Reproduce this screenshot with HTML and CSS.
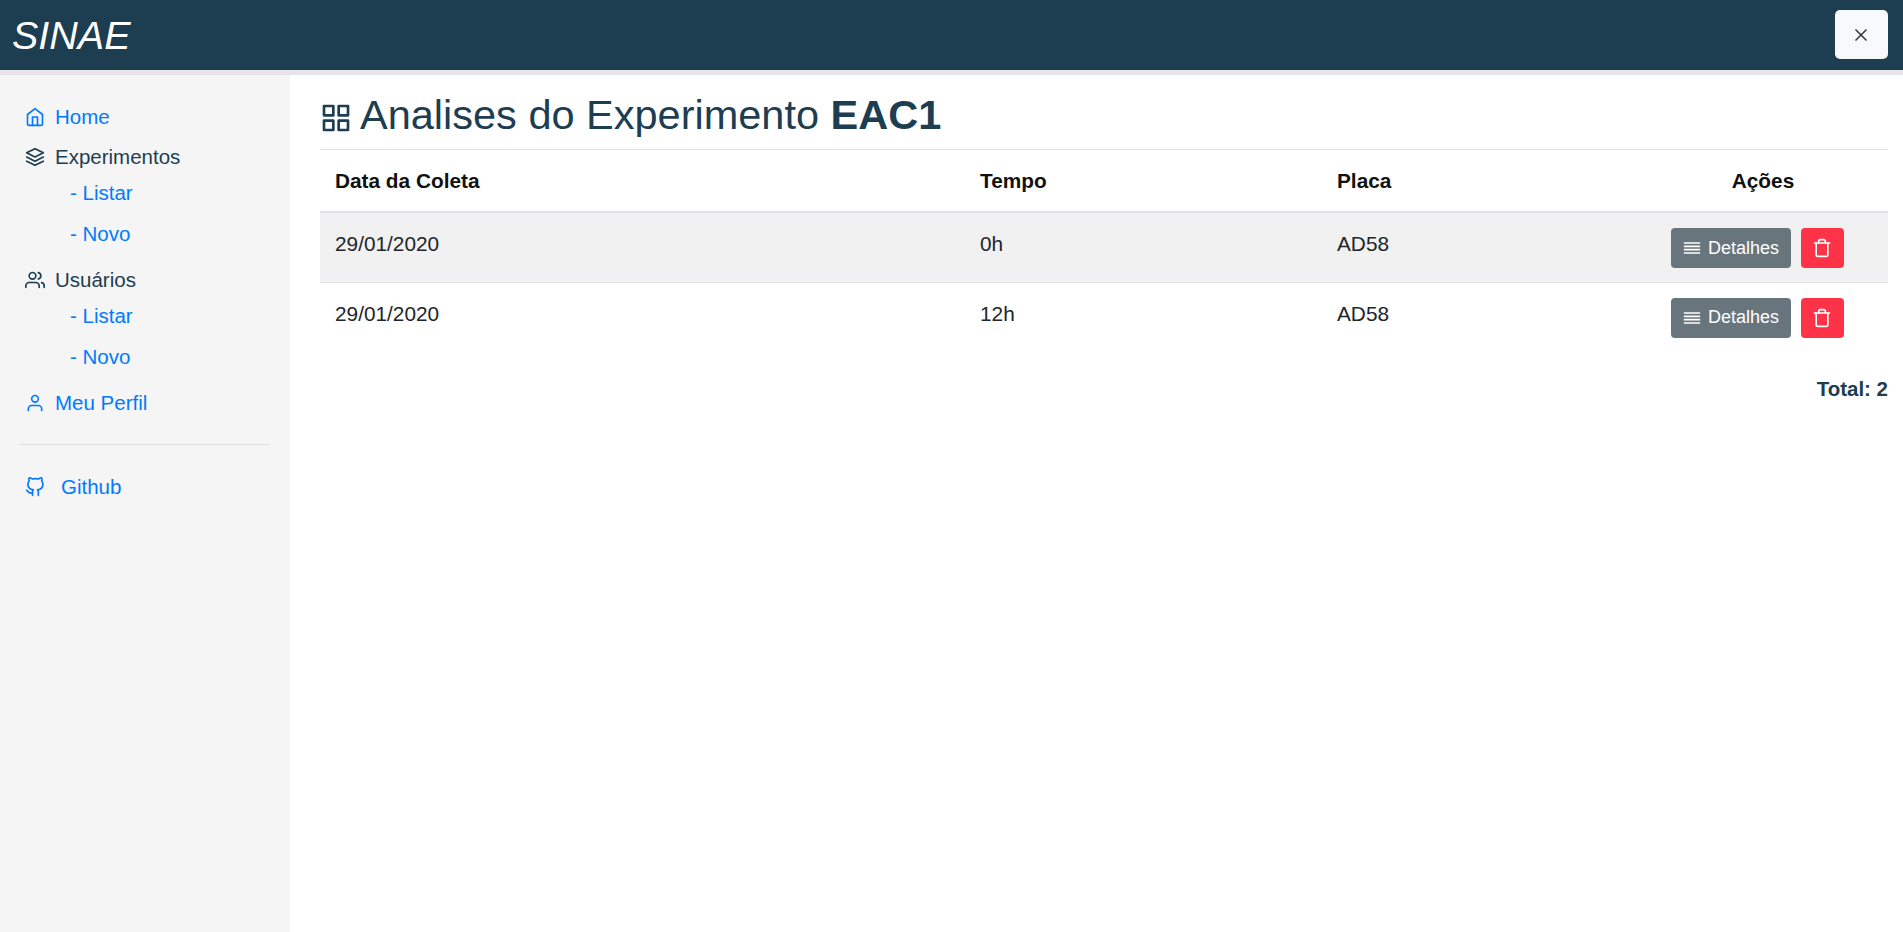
FILE: index.html
```html
<!DOCTYPE html>
<html lang="en">

<head>
    <meta charset="UTF-8">
    <meta name="viewport" content="width=device-width, initial-scale=1.0">
    <title>SINAE</title>
    <link rel="stylesheet" href="styles.css">
</head>

<body>

    <nav class="topbar">
        <a class="brand">SINAE</a>
        <button class="close-btn">
            <svg class="icon" viewBox="0 0 24 24"><line x1="18" y1="6" x2="6" y2="18"></line><line x1="6" y1="6" x2="18" y2="18"></line></svg>
        </button>
    </nav>

    <div class="container">
        <div class="sidebar">
            <a class="menu-link">
                <svg class="icon" viewBox="0 0 24 24"><path d="M3 9l9-7 9 7v11a2 2 0 0 1-2 2H5a2 2 0 0 1-2-2z"></path><polyline points="9 22 9 12 15 12 15 22"></polyline></svg>
                Home
            </a>
            <div class="menu-group">
                <div class="menu-head">
                    <svg class="icon" viewBox="0 0 24 24"><polygon points="12 2 2 7 12 12 22 7 12 2"></polygon><polyline points="2 17 12 22 22 17"></polyline><polyline points="2 12 12 17 22 12"></polyline></svg>
                    Experimentos
                </div>
                <a class="sub-link">- Listar</a>
                <a class="sub-link">- Novo</a>
            </div>
            <div class="menu-group">
                <div class="menu-head">
                    <svg class="icon" viewBox="0 0 24 24"><path d="M17 21v-2a4 4 0 0 0-4-4H5a4 4 0 0 0-4 4v2"></path><circle cx="9" cy="7" r="4"></circle><path d="M23 21v-2a4 4 0 0 0-3-3.87"></path><path d="M16 3.13a4 4 0 0 1 0 7.75"></path></svg>
                    Usuários
                </div>
                <a class="sub-link">- Listar</a>
                <a class="sub-link">- Novo</a>
            </div>
            <a class="menu-link">
                <svg class="icon" viewBox="0 0 24 24"><path d="M20 21v-2a4 4 0 0 0-4-4H8a4 4 0 0 0-4 4v2"></path><circle cx="12" cy="7" r="4"></circle></svg>
                Meu Perfil
            </a>
            <hr class="divider">
            <a class="menu-link github-link">
                <svg class="icon" viewBox="0 0 24 24"><path d="M9 19c-5 1.5-5-2.5-7-3m14 6v-3.87a3.37 3.37 0 0 0-.94-2.61c3.14-.35 6.44-1.54 6.44-7A5.44 5.44 0 0 0 20 4.77 5.07 5.07 0 0 0 19.91 1S18.73.65 16 2.48a13.38 13.38 0 0 0-7 0C6.27.65 5.09 1 5.09 1A5.07 5.07 0 0 0 5 4.77a5.44 5.44 0 0 0-1.5 3.75c0 5.42 3.3 6.61 6.44 7A3.37 3.37 0 0 0 9 18.13V22"></path></svg>
                Github
            </a>
        </div>

        <div class="main-content">
            <h1 class="page-title">
                <svg class="icon title-icon" viewBox="0 0 24 24"><rect x="3" y="3" width="7" height="7"></rect><rect x="14" y="3" width="7" height="7"></rect><rect x="14" y="14" width="7" height="7"></rect><rect x="3" y="14" width="7" height="7"></rect></svg>
                <span>Analises do Experimento <b>EAC1</b></span>
            </h1>

            <table class="data-table">
                <colgroup>
                    <col class="col-date">
                    <col class="col-time">
                    <col class="col-plate">
                    <col class="col-actions">
                </colgroup>
                <thead>
                    <tr>
                        <th>Data da Coleta</th>
                        <th>Tempo</th>
                        <th>Placa</th>
                        <th class="center">Ações</th>
                    </tr>
                </thead>
                <tbody>
                    <tr class="striped">
                        <td>29/01/2020</td>
                        <td>0h</td>
                        <td>AD58</td>
                        <td class="actions-cell">
                            <div class="actions">
                                <button class="btn btn-details">
                                    <svg class="icon" viewBox="0 0 24 24"><line x1="21" y1="10" x2="3" y2="10"></line><line x1="21" y1="6" x2="3" y2="6"></line><line x1="21" y1="14" x2="3" y2="14"></line><line x1="21" y1="18" x2="3" y2="18"></line></svg>
                                    Detalhes
                                </button>
                                <button class="btn btn-delete">
                                    <svg class="icon" viewBox="0 0 24 24"><polyline points="3 6 5 6 21 6"></polyline><path d="M19 6v14a2 2 0 0 1-2 2H7a2 2 0 0 1-2-2V6m3 0V4a2 2 0 0 1 2-2h4a2 2 0 0 1 2 2v2"></path></svg>
                                </button>
                            </div>
                        </td>
                    </tr>
                    <tr>
                        <td>29/01/2020</td>
                        <td>12h</td>
                        <td>AD58</td>
                        <td class="actions-cell">
                            <div class="actions">
                                <button class="btn btn-details">
                                    <svg class="icon" viewBox="0 0 24 24"><line x1="21" y1="10" x2="3" y2="10"></line><line x1="21" y1="6" x2="3" y2="6"></line><line x1="21" y1="14" x2="3" y2="14"></line><line x1="21" y1="18" x2="3" y2="18"></line></svg>
                                    Detalhes
                                </button>
                                <button class="btn btn-delete">
                                    <svg class="icon" viewBox="0 0 24 24"><polyline points="3 6 5 6 21 6"></polyline><path d="M19 6v14a2 2 0 0 1-2 2H7a2 2 0 0 1-2-2V6m3 0V4a2 2 0 0 1 2-2h4a2 2 0 0 1 2 2v2"></path></svg>
                                </button>
                            </div>
                        </td>
                    </tr>
                </tbody>
            </table>

            <p class="total">Total: 2</p>
        </div>
    </div>

</body>

</html>
```

FILE: styles.css
```css
* {
    box-sizing: border-box;
}

body {
    font-family: "Liberation Sans", Arial, sans-serif;
    font-size: 20.5px;
    margin: 0;
    padding: 0;
    color: #212529;
    background-color: #e5e5e5;
}

.icon {
    width: 20px;
    height: 20px;
    flex-shrink: 0;
    fill: none;
    stroke: currentColor;
    stroke-width: 2;
    stroke-linecap: round;
    stroke-linejoin: round;
}

.topbar {
    display: flex;
    align-items: center;
    justify-content: space-between;
    height: 70px;
    padding: 0 15px 1px 12px;
    background-color: #1d3d51;
}

.brand {
    margin-top: 2px;
    font-size: 39.5px;
    font-style: italic;
    color: #fff;
}

.close-btn {
    display: flex;
    align-items: center;
    justify-content: center;
    width: 53px;
    height: 49px;
    padding: 1px 2px 0 0;
    border: none;
    border-radius: 5px;
    background-color: #f8f9fa;
    color: #343a40;
}

.container {
    display: flex;
    height: 857px;
    margin-top: 5px;
    background-color: #fff;
}

.sidebar {
    width: 290px;
    padding: 21px 20px 0;
    background-color: #f5f5f5;
}

.menu-link,
.menu-head {
    display: flex;
    align-items: center;
    gap: 10px;
    padding-left: 5px;
}

.menu-link {
    height: 41px;
    color: #007bff;
}

.menu-head {
    height: 35.5px;
    padding-top: 5px;
    color: #1d3d51;
}

.menu-group {
    margin-bottom: 5px;
}

.sub-link {
    display: flex;
    align-items: center;
    height: 41px;
    padding-left: 50px;
    color: #007bff;
}

.divider {
    margin: 21px 0 21px;
    border: none;
    border-top: 1px solid #dfdfdf;
}

.github-link {
    gap: 16px;
}

.main-content {
    flex: 1;
    padding: 0 15px 0 30px;
}

.page-title {
    display: flex;
    align-items: center;
    gap: 8px;
    height: 75px;
    margin: 0;
    padding-top: 5px;
    border-bottom: 1px solid #dee2e6;
    font-size: 41.5px;
    font-weight: 400;
    color: #1d3d51;
}

.title-icon {
    width: 32px;
    height: 32px;
    margin-top: 6px;
}

.data-table {
    width: 100%;
    border-collapse: collapse;
    table-layout: fixed;
    font-size: 20.8px;
}

.col-date {
    width: 645px;
}

.col-time {
    width: 357px;
}

.col-plate {
    width: 316px;
}

.col-actions {
    width: 250px;
}

.data-table th {
    height: 62px;
    padding: 0 15px;
    border-bottom: 2px solid #dee2e6;
    text-align: left;
    color: #111;
}

.data-table th.center {
    text-align: center;
}

.data-table td {
    height: 70px;
    padding: 19px 15px 0;
    vertical-align: top;
    line-height: 24px;
    color: #212529;
}

.data-table td.actions-cell {
    padding-top: 15px;
}

.striped td {
    border-bottom: 1px solid #dee2e6;
    background-color: #f1f1f1;
}

.actions {
    display: flex;
    justify-content: center;
    gap: 10px;
    margin: 0 -15px;
    padding-right: 12px;
}

.btn {
    display: flex;
    align-items: center;
    justify-content: center;
    height: 40px;
    padding: 0;
    border: none;
    border-radius: 4px;
    font-family: inherit;
    font-size: 18px;
    color: #fff;
}

.btn-details {
    gap: 6px;
    width: 120px;
    background-color: #68757d;
}

.btn-delete {
    width: 43px;
    background-color: #ff3347;
}

.total {
    margin: 25px 0 0;
    text-align: right;
    font-weight: 700;
    font-size: 20.5px;
    color: #1d3d51;
}
```
